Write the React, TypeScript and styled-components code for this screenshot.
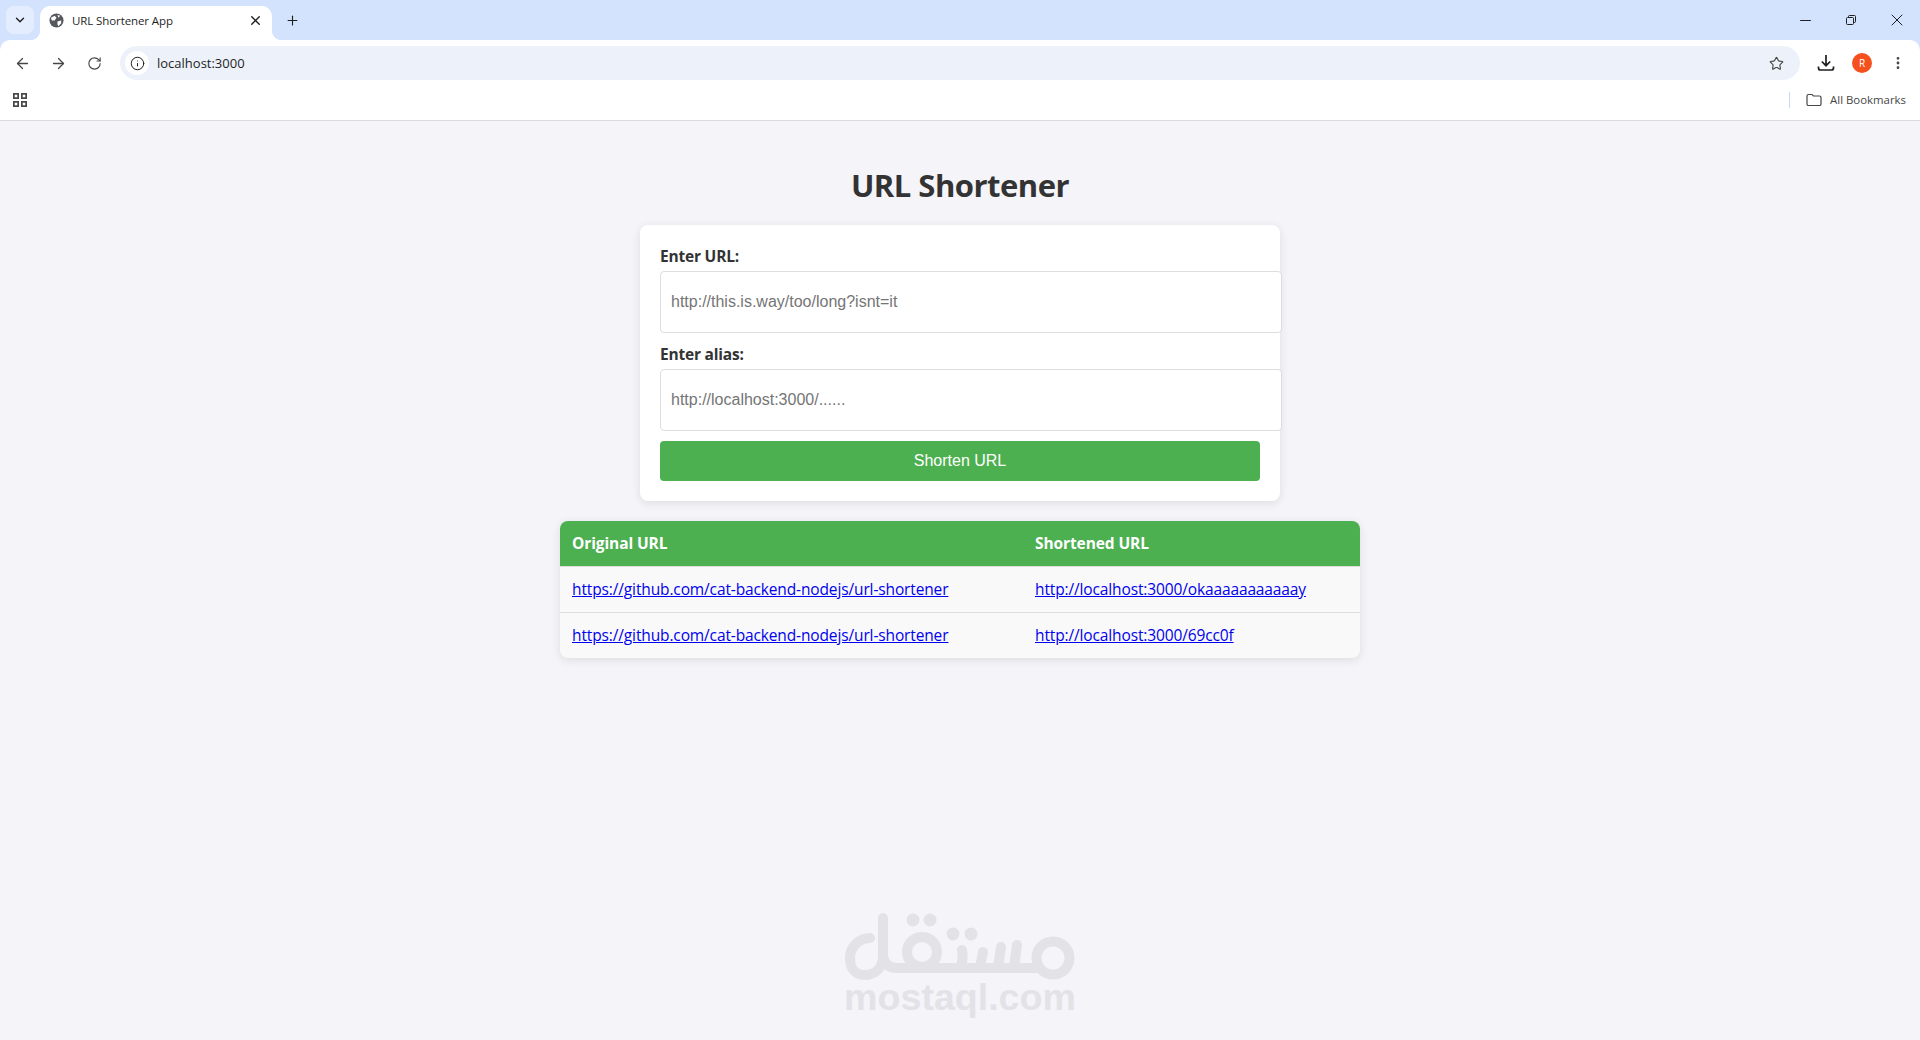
import React from "react";
import styled, { createGlobalStyle } from "styled-components";
import { ArrowLeft, ArrowRight, ChevronDown, Info, Minus, MoreVertical, Plus, RotateCw, Star, X } from "lucide-react";

const uiFont = `"Open Sans", "Noto Sans", sans-serif`;

const rows = [
  { original: "https://github.com/cat-backend-nodejs/url-shortener", short: "http://localhost:3000/okaaaaaaaaaaay" },
  { original: "https://github.com/cat-backend-nodejs/url-shortener", short: "http://localhost:3000/69cc0f" },
];

const Globe = () => (
  <svg width="15" height="15" viewBox="0 0 16 16">
    <circle cx="8" cy="8" r="7.5" fill="#55585c" />
    <path d="M2 5 L6 3 L8 5 L6 8 L3 8 Z M9 9 L13 8 L13 11 L10 14 L9 12 Z M9 2 L12 3 L10 5 Z" fill="#fff" />
  </svg>
);

const Restore = () => (
  <svg width="10" height="10" viewBox="0 0 10 10" fill="none" stroke="#1f1f1f" strokeWidth="1">
    <rect x="0.5" y="2.5" width="7" height="7" rx="1" />
    <path d="M2.5 2.5 V1.5 A1 1 0 0 1 3.5 0.5 H8.5 A1 1 0 0 1 9.5 1.5 V6.5 A1 1 0 0 1 8.5 7.5 H7.5" />
  </svg>
);

const DownloadIcon = () => (
  <svg width="18" height="18" viewBox="0 0 18 18" fill="none" stroke="#1f1f1f" strokeWidth="1.7">
    <path d="M9 1 V11.5 M4.8 7.5 L9 11.7 L13.2 7.5" />
    <path d="M1.5 12.5 V14 A2 2 0 0 0 3.5 16 H14.5 A2 2 0 0 0 16.5 14 V12.5" />
  </svg>
);

const FolderIcon = () => (
  <svg width="16" height="14" viewBox="0 0 16 14" fill="none" stroke="#474747" strokeWidth="1.2">
    <path d="M1 3 A1.5 1.5 0 0 1 2.5 1.5 H6 L7.5 3 H13.5 A1.5 1.5 0 0 1 15 4.5 V11 A1.5 1.5 0 0 1 13.5 12.5 H2.5 A1.5 1.5 0 0 1 1 11 Z" />
  </svg>
);

const AppsIcon = () => (
  <svg width="14" height="14" viewBox="0 0 14 14" fill="none" stroke="#474747" strokeWidth="1.7">
    <rect x="0.85" y="0.85" width="4.3" height="4.3" />
    <rect x="8.85" y="0.85" width="4.3" height="4.3" />
    <rect x="0.85" y="8.85" width="4.3" height="4.3" />
    <rect x="8.85" y="8.85" width="4.3" height="4.3" />
  </svg>
);

// the arabic wordmark of the watermark, in page coordinates
const MostaqlLogo = () => (
  <svg width="232" height="70" viewBox="844 912 232 70" fill="none" stroke="#e3e3e7" strokeWidth="10" strokeLinecap="round">
    <path d="M883 918 V955 C883 968 875 975 864 975 C855 975 850 968 850 958 C850 946 860 938 870 938" />
    <path d="M883 956 Q885 968 897 968 H1040" />
    <circle cx="922" cy="952" r="15" />
    <path d="M962 950 Q964 960 960 967 M983 952 L980 967 M1001 947 L998 967 M1017 945 L1014 967" />
    <circle cx="1053" cy="958" r="16.5" />
    <g fill="#e3e3e7" stroke="none">
      <circle cx="913" cy="920" r="6.5" />
      <circle cx="930" cy="920" r="6.5" />
      <circle cx="953" cy="934" r="6.5" />
      <circle cx="971" cy="934" r="6.5" />
    </g>
  </svg>
);

export default function App() {
  return (
    <>
      <GlobalStyle />
      <Window>
        <TabStrip>
          <TabSearch><ChevronDown size={14} strokeWidth={2.4} color="#1f1f1f" /></TabSearch>
          <Tab>
            <Globe />
            <TabTitle>URL Shortener App</TabTitle>
            <X size={15} strokeWidth={2.2} color="#1f1f1f" />
          </Tab>
          <NewTab><Plus size={15} strokeWidth={1.8} color="#1f1f1f" /></NewTab>
          <WindowControls>
            <WindowButton><Minus size={17} strokeWidth={1.4} color="#1f1f1f" /></WindowButton>
            <WindowButton><Restore /></WindowButton>
            <WindowButton><X size={20} strokeWidth={1.2} color="#1f1f1f" /></WindowButton>
          </WindowControls>
        </TabStrip>
        <Toolbar>
          <NavButton><ArrowLeft size={17} strokeWidth={1.8} color="#474747" /></NavButton>
          <NavButton><ArrowRight size={17} strokeWidth={1.8} color="#474747" /></NavButton>
          <NavButton><RotateCw size={15} strokeWidth={1.8} color="#474747" /></NavButton>
          <AddressBar>
            <InfoChip><Info size={15} strokeWidth={1.6} color="#1f1f1f" /></InfoChip>
            <AddressText>localhost:3000</AddressText>
            <Star size={15} strokeWidth={1.8} color="#474747" />
          </AddressBar>
          <ActionButton $first><DownloadIcon /></ActionButton>
          <ActionButton><Avatar>R</Avatar></ActionButton>
          <ActionButton><MoreVertical size={16} strokeWidth={2.2} color="#474747" /></ActionButton>
        </Toolbar>
        <BookmarksBar>
          <AppsIcon />
          <BookmarkSeparator />
          <FolderIcon />
          <BookmarkText>All Bookmarks</BookmarkText>
        </BookmarksBar>
      </Window>
      <Page>
        <Title>URL Shortener</Title>
        <Card>
          <Label htmlFor="url">Enter URL:</Label>
          <Input id="url" placeholder="http://this.is.way/too/long?isnt=it" />
          <Label htmlFor="alias">Enter alias:</Label>
          <Input id="alias" placeholder="http://localhost:3000/......" />
          <SubmitButton>Shorten URL</SubmitButton>
        </Card>
        <Table>
          <thead>
            <tr>
              <HeadCell $first>Original URL</HeadCell>
              <HeadCell>Shortened URL</HeadCell>
            </tr>
          </thead>
          <tbody>
            {rows.map((row) => (
              <tr key={row.short}>
                <Cell><UrlLink href="#">{row.original}</UrlLink></Cell>
                <Cell><UrlLink href="#">{row.short}</UrlLink></Cell>
              </tr>
            ))}
          </tbody>
        </Table>
        <Watermark>
          <MostaqlLogo />
          <WatermarkText>mostaql.com</WatermarkText>
        </Watermark>
      </Page>
    </>
  );
}

const GlobalStyle = createGlobalStyle`
  html, body {
    margin: 0;
    height: 1040px;
    overflow: hidden;
    background: #f4f4f9;
    font-family: ${uiFont};
  }
`;

const Window = styled.header`
  background: #d3e3fd;
`;

const TabStrip = styled.div`
  height: 40px;
  display: flex;
  align-items: flex-end;
  padding-left: 6px;
`;

const TabSearch = styled.div`
  width: 28px;
  height: 28px;
  margin-bottom: 6px;
  border-radius: 8px;
  background: #e3edfe;
  display: flex;
  align-items: center;
  justify-content: center;
`;

const Tab = styled.div`
  position: relative;
  width: 232px;
  height: 34px;
  margin-left: 6px;
  box-sizing: border-box;
  padding: 0 9px 6px 9px;
  background: #fff;
  border-radius: 10px 10px 0 0;
  display: flex;
  align-items: center;

  &::before,
  &::after {
    content: "";
    position: absolute;
    bottom: 0;
    width: 10px;
    height: 10px;
  }
  &::before {
    left: -10px;
    background: radial-gradient(circle at 0 0, transparent 10px, #fff 10.5px);
  }
  &::after {
    right: -10px;
    background: radial-gradient(circle at 100% 0, transparent 10px, #fff 10.5px);
  }
`;

const TabTitle = styled.span`
  flex: 1;
  margin-left: 8px;
  font-size: 11.5px;
  letter-spacing: -0.1px;
  color: #1f1f1f;
  white-space: nowrap;
`;

const NewTab = styled.div`
  width: 28px;
  height: 28px;
  margin: 0 0 6px 6px;
  display: flex;
  align-items: center;
  justify-content: center;
`;

const WindowControls = styled.div`
  margin-left: auto;
  align-self: stretch;
  display: flex;
`;

const WindowButton = styled.div`
  width: 46px;
  display: flex;
  align-items: center;
  justify-content: center;
`;

const Toolbar = styled.div`
  height: 40px;
  box-sizing: border-box;
  padding: 6px 4px 0 4px;
  background: #fff;
  border-radius: 10px 10px 0 0;
  display: flex;
  align-items: center;
`;

const NavButton = styled.div`
  width: 36px;
  height: 34px;
  display: flex;
  align-items: center;
  justify-content: center;
`;

const AddressBar = styled.div`
  flex: 1;
  height: 34px;
  margin-left: 8px;
  padding: 0 16px 0 5px;
  border-radius: 17px;
  background: #edf2fa;
  display: flex;
  align-items: center;
`;

const InfoChip = styled.div`
  width: 24px;
  height: 24px;
  border-radius: 50%;
  background: #fff;
  display: flex;
  align-items: center;
  justify-content: center;
`;

const AddressText = styled.span`
  flex: 1;
  margin-left: 8px;
  font-size: 13px;
  color: #1f1f1f;
`;

const ActionButton = styled.div<{ $first?: boolean }>`
  width: 36px;
  height: 34px;
  margin-left: ${(p) => (p.$first ? "8px" : "0")};
  display: flex;
  align-items: center;
  justify-content: center;
`;

const Avatar = styled.div`
  width: 20px;
  height: 20px;
  border-radius: 50%;
  background: #f4511e;
  color: #fff;
  font-size: 10px;
  display: flex;
  align-items: center;
  justify-content: center;
`;

const BookmarksBar = styled.div`
  height: 41px;
  box-sizing: border-box;
  padding: 0 14px 0 13px;
  background: #fff;
  border-bottom: 1px solid #dadce0;
  display: flex;
  align-items: center;
`;

const BookmarkSeparator = styled.div`
  width: 1px;
  height: 16px;
  margin: 0 16px 0 auto;
  background: #c7d9f7;
`;

const BookmarkText = styled.span`
  margin-left: 8px;
  padding-bottom: 2px;
  font-size: 11.4px;
  color: #474747;
  white-space: nowrap;
`;

const Page = styled.main`
  position: relative;
  padding-top: 43px;
  display: flex;
  flex-direction: column;
  align-items: center;
  color: #333;
`;

const Title = styled.h1`
  margin: 0 0 18px;
  font-size: 31px;
  letter-spacing: -0.5px;
  line-height: 43px;
  font-weight: 700;
  color: #333;
`;

const Card = styled.form`
  width: 640px;
  box-sizing: border-box;
  padding: 20px;
  border-radius: 8px;
  background: #fff;
  box-shadow: 0 2px 10px rgba(0, 0, 0, 0.1);
`;

const Label = styled.label`
  display: block;
  padding-top: 1px;
  margin-bottom: 4px;
  font-size: 15.5px;
  letter-spacing: -0.2px;
  line-height: 21px;
  font-weight: 700;
`;

const Input = styled.input`
  display: block;
  width: 600px;
  height: 40px;
  margin: 0 0 10px;
  padding: 10px;
  border: 1px solid #ddd;
  border-radius: 4px;
  outline: none;
  background: #fff;
  font-family: "Liberation Sans", Arial, sans-serif;
  font-size: 16px;
`;

const SubmitButton = styled.button`
  display: block;
  width: 600px;
  height: 40px;
  padding: 0;
  border: 0;
  border-radius: 4px;
  background: #4caf50;
  color: #fff;
  font-family: "Liberation Sans", Arial, sans-serif;
  font-size: 16px;
`;

const Table = styled.table`
  width: 800px;
  margin-top: 20px;
  border-collapse: collapse;
  table-layout: fixed;
  overflow: hidden;
  border-radius: 8px;
  background: #f9f9f9;
  box-shadow: 0 2px 10px rgba(0, 0, 0, 0.1);
`;

const HeadCell = styled.th<{ $first?: boolean }>`
  width: ${(p) => (p.$first ? "463px" : "auto")};
  height: 45px;
  box-sizing: border-box;
  padding: 0 12px;
  background: #4caf50;
  border-bottom: 1px solid #ddd;
  color: #fff;
  font-size: 15.5px;
  letter-spacing: -0.1px;
  font-weight: 700;
  text-align: left;
`;

const Cell = styled.td`
  height: 46px;
  box-sizing: border-box;
  padding: 0 12px;
  border-bottom: 1px solid #ddd;
  font-size: 15.5px;
  letter-spacing: -0.13px;
  tr:last-child & {
    border-bottom: 0;
  }
`;

const UrlLink = styled.a`
  color: #0000ee;
  text-decoration: underline;
`;

const Watermark = styled.div`
  position: absolute;
  left: 844px;
  top: 791px;
  width: 232px;
  display: flex;
  flex-direction: column;
  align-items: center;
`;

const WatermarkText = styled.span`
  margin-top: -5px;
  font-family: "Liberation Sans", Arial, sans-serif;
  font-size: 37.6px;
  line-height: 40px;
  font-weight: 700;
  color: #e3e3e7;
  white-space: nowrap;
`;
